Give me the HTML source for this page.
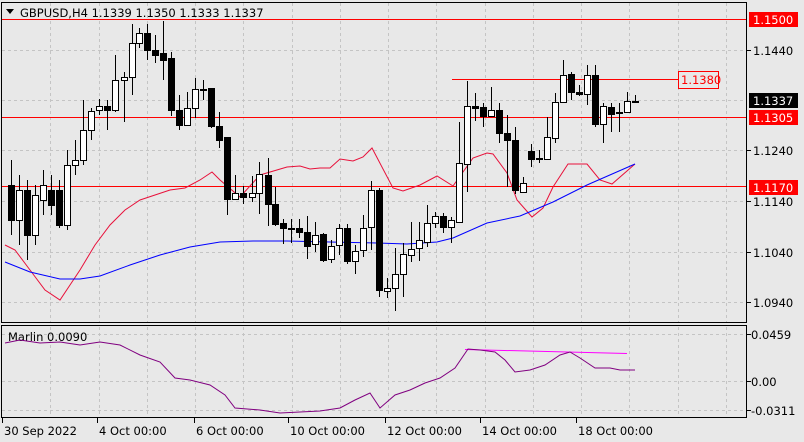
<!DOCTYPE html>
<html><head><meta charset="utf-8"><style>
body{margin:0;width:804px;height:442px;background:#e8e8e8;overflow:hidden;font-family:"DejaVu Sans","Liberation Sans",sans-serif;}
svg{display:block}
text{font-family:"DejaVu Sans","Liberation Sans",sans-serif;font-size:11.5px;fill:#000}
</style></head><body>
<svg id="s" width="804" height="442" xmlns="http://www.w3.org/2000/svg"></svg>
<script>
var s=document.getElementById('s');var h='';
h+='<rect x="0" y="0" width="804" height="442" fill="#e8e8e8"/>';
// grid
for(var k=0;k<15;k++){var x=Math.round(50.3+48.25*k)+.5;h+='<line x1="'+x+'" y1="3" x2="'+x+'" y2="322" stroke="#c4c4c4" stroke-dasharray="3,3"/>';h+='<line x1="'+x+'" y1="327" x2="'+x+'" y2="417" stroke="#c4c4c4" stroke-dasharray="3,3"/>';}
[50,100,150,201,252,302].forEach(function(y){h+='<line x1="2" y1="'+(y+.5)+'" x2="746" y2="'+(y+.5)+'" stroke="#c4c4c4" stroke-dasharray="3,3"/>';});
[334,381,410].forEach(function(y){h+='<line x1="2" y1="'+(y+.5)+'" x2="746" y2="'+(y+.5)+'" stroke="#c4c4c4" stroke-dasharray="3,3"/>';});
// horizontal levels
[19,117,186].forEach(function(y){h+='<line x1="2" y1="'+(y+.5)+'" x2="747" y2="'+(y+.5)+'" stroke="#ff0000"/>';});
h+='<line x1="452" y1="79.5" x2="678" y2="79.5" stroke="#ff0000"/>';
h+='<rect x="678.5" y="71.5" width="40" height="17" fill="#e8e8e8" stroke="#ff0000"/><text x="681" y="84" style="fill:#ff0000">1.1380</text>';
// red & blue lines
var red=[[5,245],[15,250],[30,270],[45,290],[60,300],[70,285],[80,270],[95,245],[110,225],[125,210],[140,200],[155,195],[170,190],[185,188],[200,180],[212,172],[220,180],[240,197],[260,175],[287,167],[300,166],[310,169],[320,168],[330,168],[340,159],[353,161],[363,157],[372,148],[393,188],[403,191],[420,185],[437,176],[453,186],[473,158],[487,153],[493,154],[507,173],[517,200],[532,217],[543,208],[553,187],[568,164],[587,164],[600,180],[612,184],[635,164]];
var blue=[[5,262],[30,272],[60,279],[80,279],[100,276],[130,265],[160,255],[190,247],[220,242],[253,241],[287,241],[330,242],[377,243],[407,244],[437,242],[453,238],[487,223],[520,216],[553,202],[587,185],[635,164]];
function pl(a,c){return '<polyline fill="none" stroke="'+c+'" stroke-width="1" points="'+a.map(function(p){return p.join(',')}).join(' ')+'"/>';}
h+=pl(red,'#e8103a');h+=pl(blue,'#0000ff');
// candles [x,o,c,h,l] pixel
var C=[[11,185,220,160,235],[19,220,190,175,245],[27,190,235,180,260],[35,235,195,185,245],[43,200,185,170,215],[51,190,205,175,215],[59,190,225,180,228],[67,225,165,150,230],[75,165,160,140,175],[83,160,130,100,165],[91,130,111,108,140],[99,110,106,99,115],[107,106,110,100,130],[115,110,80,55,112],[124,80,77,72,122],[132,77,43,24,95],[139,43,33,28,48],[147,33,50,24,60],[155,50,55,35,63],[163,53,60,21,80],[171,58,110,52,116],[179,110,125,95,130],[187,125,108,92,125],[195,108,89,78,118],[203,89,89,80,100],[211,88,126,88,128],[219,126,140,112,148]];
var Z=[[227,230,418,230,465],[235,418,400,345,420],[243,398,412,378,432],[252,410,400,348,425],[259,400,343,305,462],[268,345,433,295,498],[275,433,492,380,498],[283,490,505,478,553],[291,505,508,478,548],[299,505,515,478,535],[307,517,557,467,598],[315,552,525,485,575],[323,522,600,520,605],[331,598,558,540,608],[339,555,505,492,585],[347,505,602,492,612],[355,603,572,555,642],[363,570,505,465,592],[371,502,390,362,570],[379,390,690,385,710],[387,692,685,655,715],[395,685,643,565,752],[403,643,582,550,710],[411,585,567,485,605],[419,565,540,485,602],[427,545,490,435,560],[435,490,468,455,505],[443,468,502,460,520],[451,502,480,470,548],[459,485,310,185,487],[467,313,138,62,395],[475,138,145,100,182],[483,142,168,128,200],[491,168,150,80,170],[499,150,220,130,250],[507,220,240,165,382],[515,240,390,200,402],[523,395,370,352,398],[531,272,298,252,320],[539,295,297,270,310],[547,297,232,172,300],[555,235,125,100,250],[563,125,45,0,130],[571,42,95,35,120],[579,95,103,75,108],[587,102,45,15,135],[595,45,193,15,200],[603,193,138,130,250],[611,142,162,128,215],[619,160,155,130,215],[627,155,122,95,158],[635,122,122,105,130]];
Z.forEach(function(c){C.push([c[0],c[1]/3+60,c[2]/3+60,c[3]/3+60,c[4]/3+60]);});
C.forEach(function(c){var x=c[0],o=Math.round(c[1]),cl=Math.round(c[2]),hi=Math.round(c[3]),lo=Math.round(c[4]);
h+='<line x1="'+(x+.5)+'" y1="'+hi+'" x2="'+(x+.5)+'" y2="'+lo+'" stroke="#000"/>';
var t=Math.min(o,cl),b=Math.max(o,cl);if(b-t<1)b=t+1;
var bull=cl<o;h+='<rect x="'+(x-2.5)+'" y="'+(t+.5)+'" width="6" height="'+(b-t)+'" fill="'+(bull?'#fff':'#000')+'" stroke="#000"/>';});
// borders
h+='<rect x="1.5" y="2.5" width="745" height="320" fill="none" stroke="#000"/>';
h+='<rect x="1.5" y="325.5" width="745" height="92" fill="none" stroke="#000"/>';
// title
h+='<polygon points="6,9 14,9 10,14" fill="#000"/><text x="20" y="17">GBPUSD,H4  1.1339 1.1350 1.1333 1.1337</text>';
// axis labels
[[50,'1.1440'],[150,'1.1240'],[201,'1.1140'],[252,'1.1040'],[302,'1.0940']].forEach(function(a){h+='<line x1="747" y1="'+(a[0]+.5)+'" x2="751" y2="'+(a[0]+.5)+'" stroke="#000"/><text x="753" y="'+(a[0]+5)+'">'+a[1]+'</text>';});
[[19,'1.1500','#ff0000'],[100,'1.1337','#000'],[117,'1.1305','#ff0000'],[187,'1.1170','#ff0000']].forEach(function(a){h+='<rect x="749" y="'+(a[0]-7)+'" width="49" height="15" fill="'+a[2]+'"/><text x="753" y="'+(a[0]+5)+'" style="fill:#fff">'+a[1]+'</text>';});
[[334,'0.0459'],[381,'0.00'],[410,'-0.0311']].forEach(function(a){h+='<line x1="747" y1="'+(a[0]+.5)+'" x2="751" y2="'+(a[0]+.5)+'" stroke="#000"/><text x="751" y="'+(a[0]+5)+'">'+a[1]+'</text>';});
// indicator
h+='<text x="8" y="341">Marlin 0.0090</text>';
h+='<line x1="465" y1="349.5" x2="627" y2="353.5" stroke="#ff00ff"/>';
var pur=[[5,343],[20,340],[40,343],[60,342],[80,345],[100,342],[120,345],[140,355],[160,362],[175,378],[190,380],[210,385],[225,395],[235,408],[260,410],[280,413],[300,412],[320,411],[340,408],[355,400],[370,393],[380,408],[395,395],[410,390],[425,383],[440,378],[455,368],[468,349],[480,350],[495,352],[505,360],[515,372],[530,370],[545,365],[560,355],[570,352],[580,358],[595,368],[610,368],[620,370],[635,370]];
h+=pl(pur,'#800080');
// time axis
[[4,'30 Sep 2022'],[99,'4 Oct 00:00'],[196,'6 Oct 00:00'],[290,'10 Oct 00:00'],[387,'12 Oct 00:00'],[482,'14 Oct 00:00'],[578,'18 Oct 00:00']].forEach(function(a){h+='<line x1="'+(a[0]-1.5)+'" y1="418" x2="'+(a[0]-1.5)+'" y2="423" stroke="#000"/><text x="'+a[0]+'" y="435">'+a[1]+'</text>';});
s.innerHTML=h;
</script>
</body></html>
